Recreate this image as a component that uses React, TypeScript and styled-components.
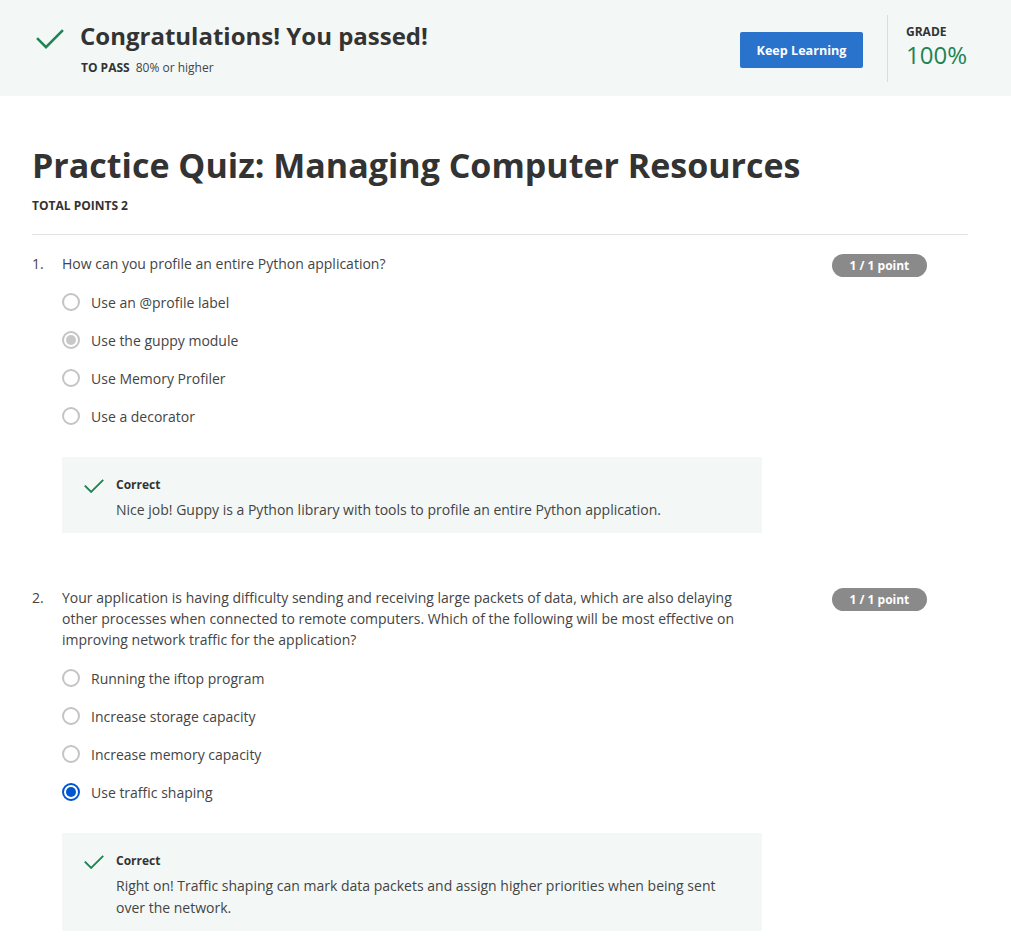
import * as React from "react";
import styled, { createGlobalStyle } from "styled-components";

const GlobalStyle = createGlobalStyle`
  body {
    margin: 0;
    background: #fff;
    font-family: "Open Sans", "Noto Sans", sans-serif;
    color: #333;
  }
`;

const Banner = styled.header`
  height: 96px;
  background: #f3f8f6;
  display: flex;
  align-items: center;
  justify-content: space-between;
  padding: 0 44px 0 36px;
`;

const BannerLeft = styled.div`
  display: flex;
  align-items: flex-start;
  gap: 16px;
`;

const BannerIcon = styled.div`
  margin-top: 8px;
  display: flex;
`;

const BannerTitle = styled.h1`
  margin: 0;
  font-size: 24px;
  line-height: 30px;
  font-weight: 700;
  color: #333;
`;

const PassLine = styled.div`
  margin: 9px 0 0 1px;
  font-size: 12px;
  line-height: 16px;
  color: #444;
`;

const PassLabel = styled.span`
  font-weight: 700;
  color: #333;
  margin-right: 6px;
`;

const BannerRight = styled.div`
  display: flex;
  align-items: center;
`;

const PrimaryButton = styled.button`
  height: 36px;
  width: 123px;
  margin-top: 4px;
  border: none;
  border-radius: 2px;
  background: #2a73cc;
  color: #fff;
  font-family: inherit;
  font-size: 12.6px;
  font-weight: 700;
  cursor: pointer;
`;

const Divider = styled.div`
  width: 1px;
  height: 67px;
  background: #dcdcdc;
  margin: 0 18px 0 24px;
`;

const Grade = styled.div`
  display: flex;
  flex-direction: column;
  margin-top: -2px;
`;

const GradeLabel = styled.div`
  font-size: 12px;
  line-height: 16px;
  font-weight: 700;
  color: #333;
`;

const GradeValue = styled.div`
  font-size: 24px;
  line-height: 30px;
  color: #1f8354;
`;

const Main = styled.main`
  padding: 46px 43px 0 32px;
`;

const QuizTitle = styled.h2`
  margin: 0;
  font-size: 34px;
  line-height: 46px;
  font-weight: 700;
  color: #333;
`;

const TotalPoints = styled.div`
  margin-top: 10px;
  font-size: 12px;
  line-height: 16px;
  font-weight: 700;
  color: #333;
`;

const Rule = styled.hr`
  margin: 20px 0 0;
  border: none;
  border-top: 1px solid #e1e1e1;
`;

const Question = styled.section`
  display: grid;
  grid-template-columns: 30px 700px 1fr;
  padding: 18px 0 36px;
`;

const Number = styled.div`
  font-size: 14px;
  line-height: 21px;
  color: #444;
`;

const Body = styled.div`
  display: flex;
  flex-direction: column;
`;

const Prompt = styled.div`
  font-size: 14px;
  line-height: 21px;
  color: #444;
`;

const Options = styled.div`
  margin-top: 9px;
  display: flex;
  flex-direction: column;
`;

const Option = styled.label`
  height: 38px;
  display: flex;
  align-items: center;
  gap: 11px;
  font-size: 14px;
  color: #444;
`;

const Radio = styled.span<{ $state: "none" | "muted" | "active" }>`
  width: 18px;
  height: 18px;
  box-sizing: border-box;
  border-radius: 50%;
  border: 2px solid
    ${(p) => (p.$state === "active" ? "#0056d2" : "#c4c4c4")};
  display: flex;
  align-items: center;
  justify-content: center;
  flex-shrink: 0;

  &::after {
    content: "";
    display: ${(p) => (p.$state === "none" ? "none" : "block")};
    width: 10px;
    height: 10px;
    border-radius: 50%;
    background: ${(p) => (p.$state === "active" ? "#0056d2" : "#c8c8c8")};
  }
`;

const Feedback = styled.div`
  margin-top: 22px;
  background: #f3f8f6;
  padding: 19px 22px 12px;
  display: flex;
  gap: 12px;
`;

const FeedbackIcon = styled.div`
  display: flex;
  margin-top: 3px;
`;

const FeedbackText = styled.div`
  display: flex;
  flex-direction: column;
`;

const FeedbackTitle = styled.div`
  font-size: 12px;
  line-height: 18px;
  font-weight: 700;
  color: #333;
`;

const FeedbackBody = styled.div`
  margin-top: 5px;
  font-size: 14px;
  line-height: 22px;
  color: #444;
`;

const Badge = styled.div`
  justify-self: start;
  margin: 1px 0 0 70px;
  height: 23px;
  padding: 0 17.5px;
  border-radius: 12px;
  background: #8a8a8a;
  color: #fff;
  font-size: 12px;
  font-weight: 700;
  line-height: 23px;
  white-space: nowrap;
`;

function Check({ size }: { size: number }) {
  return (
    <svg width={size} height={size * 0.72} viewBox="0 0 28 20" fill="none">
      <polyline
        points="2,10 10,18 26,2"
        stroke="#1f8354"
        strokeWidth="2.6"
        strokeLinecap="square"
      />
    </svg>
  );
}

type Item = {
  text: string;
  state: "none" | "muted" | "active";
};

type QuestionData = {
  n: number;
  prompt: string;
  options: Item[];
  feedback: string;
};

const questions: QuestionData[] = [
  {
    n: 1,
    prompt: "How can you profile an entire Python application?",
    options: [
      { text: "Use an @profile label", state: "none" },
      { text: "Use the guppy module", state: "muted" },
      { text: "Use Memory Profiler", state: "none" },
      { text: "Use a decorator", state: "none" },
    ],
    feedback:
      "Nice job! Guppy is a Python library with tools to profile an entire Python application.",
  },
  {
    n: 2,
    prompt:
      "Your application is having difficulty sending and receiving large packets of data, which are also delaying other processes when connected to remote computers. Which of the following will be most effective on improving network traffic for the application?",
    options: [
      { text: "Running the iftop program", state: "none" },
      { text: "Increase storage capacity", state: "none" },
      { text: "Increase memory capacity", state: "none" },
      { text: "Use traffic shaping", state: "active" },
    ],
    feedback:
      "Right on! Traffic shaping can mark data packets and assign higher priorities when being sent over the network.",
  },
];

export default function App() {
  return (
    <>
      <GlobalStyle />
      <Banner>
        <BannerLeft>
          <BannerIcon>
            <Check size={28} />
          </BannerIcon>
          <div>
            <BannerTitle>Congratulations! You passed!</BannerTitle>
            <PassLine>
              <PassLabel>TO PASS</PassLabel>80% or higher
            </PassLine>
          </div>
        </BannerLeft>
        <BannerRight>
          <PrimaryButton>Keep Learning</PrimaryButton>
          <Divider />
          <Grade>
            <GradeLabel>GRADE</GradeLabel>
            <GradeValue>100%</GradeValue>
          </Grade>
        </BannerRight>
      </Banner>
      <Main>
        <QuizTitle>Practice Quiz: Managing Computer Resources</QuizTitle>
        <TotalPoints>TOTAL POINTS 2</TotalPoints>
        <Rule />
        {questions.map((q) => (
          <Question key={q.n}>
            <Number>{q.n}.</Number>
            <Body>
              <Prompt>{q.prompt}</Prompt>
              <Options>
                {q.options.map((o) => (
                  <Option key={o.text}>
                    <Radio $state={o.state} />
                    {o.text}
                  </Option>
                ))}
              </Options>
              <Feedback>
                <FeedbackIcon>
                  <Check size={20} />
                </FeedbackIcon>
                <FeedbackText>
                  <FeedbackTitle>Correct</FeedbackTitle>
                  <FeedbackBody>{q.feedback}</FeedbackBody>
                </FeedbackText>
              </Feedback>
            </Body>
            <Badge>1 / 1 point</Badge>
          </Question>
        ))}
      </Main>
    </>
  );
}
